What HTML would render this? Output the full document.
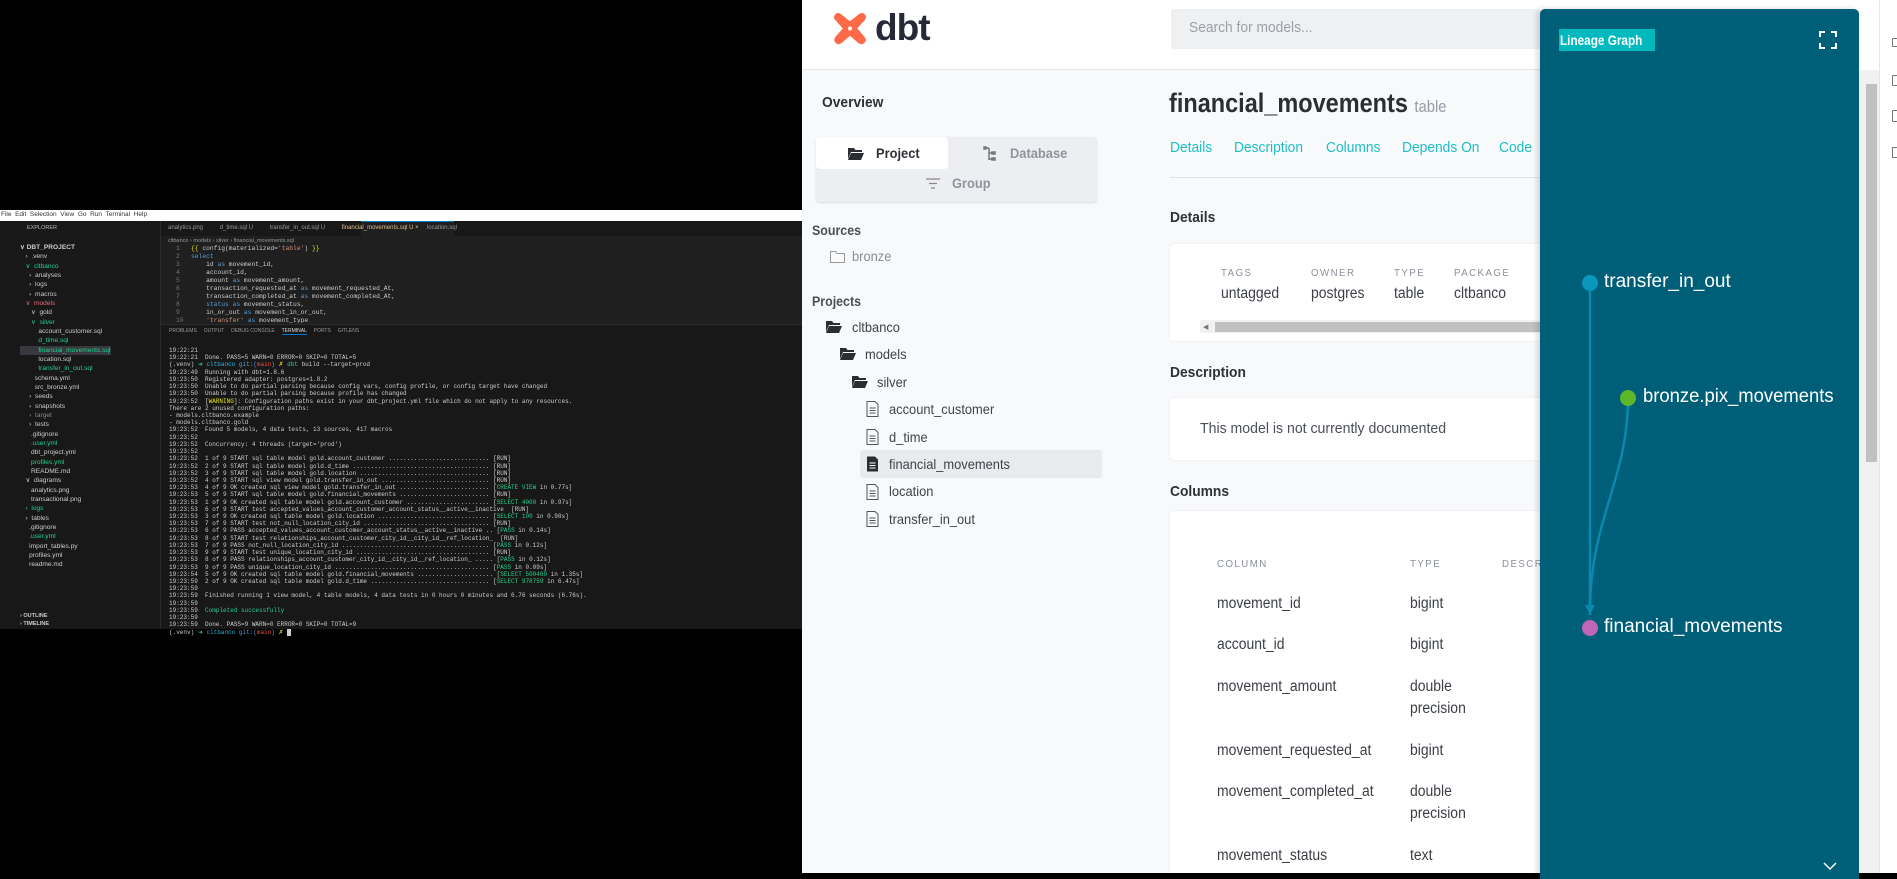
<!DOCTYPE html>
<html><head><meta charset="utf-8"><style>
*{margin:0;padding:0;box-sizing:border-box}
body{width:1897px;height:873px;background:#000;position:relative;overflow:hidden;font-family:"Liberation Sans",sans-serif}
.a{position:absolute;white-space:nowrap}
.vs{font-family:"Liberation Sans",sans-serif;font-size:6px;color:#ccc;white-space:pre}
.mono{font-family:"Liberation Mono",monospace;font-size:6.3px;white-space:pre;color:#ccc}
.term div{height:7.22px;line-height:7.22px}
.g{color:#23d18b}.c{color:#29b8db}.y{color:#e5e510}.r{color:#f14c4c}.b{color:#569cd6}.s{color:#ce9178}
.ex div{height:9.33px;line-height:9.33px}
.tr{font-size:14px;color:#40444a;position:absolute;transform:scaleX(.92);transform-origin:left;white-space:nowrap}
.hd{font-size:16px;font-weight:bold;color:#2e3136;position:absolute;transform:scaleX(.92);transform-origin:left;white-space:nowrap}
.lbl{font-size:10.5px;letter-spacing:1.6px;color:#8a9099;position:absolute;transform:scaleX(.92);transform-origin:left}
.val{font-size:15.5px;color:#3b3f45;position:absolute;transform:scaleX(.9);transform-origin:left;white-space:nowrap}
.tab{position:absolute;top:139px;font-size:15px;color:#1ebec3;transform:scaleX(.92);transform-origin:left}
</style></head><body>

<!-- VS Code -->
<div class="a" style="left:0;top:210px;width:802px;height:11px;background:#fff"></div>
<div class="a vs" style="left:1px;top:211px;color:#333;font-size:6.5px">File  Edit  Selection  View  Go  Run  Terminal  Help</div>
<div class="a" style="left:0;top:221px;width:802px;height:408px;background:#1f1f1f"></div>
<div class="a" style="left:0;top:221px;width:18px;height:408px;background:#181818"></div>
<div class="a" style="left:18px;top:221px;width:143px;height:408px;background:#181818;border-right:1px solid #2b2b2b"></div>
<div class="a" style="left:161px;top:221px;width:641px;height:15px;background:#181818"></div>
<div class="a" style="left:361px;top:221px;width:93px;height:15px;background:#1f1f1f;border-top:1px solid #0078d4"></div>
<div class="a vs" style="left:168px;top:225px;color:#999">analytics.png          d_time.sql U          transfer_in_out.sql U          <span style="color:#e2c08d">financial_movements.sql U ×</span>     location.sql</div>
<div class="a vs" style="left:27px;top:225px;color:#bbb;font-size:5.5px">EXPLORER</div>
<div class="a vs" style="left:168px;top:238px;color:#999;font-size:5.5px">cltbanco › models › silver › financial_movements.sql</div>
<div class="a vs ex" style="left:20px;top:236px;font-size:6.6px">
<div style="font-weight:bold">∨ DBT_PROJECT</div><div>   ›  .venv</div><div class="g">   ∨  cltbanco</div><div>     ›  analyses</div><div>     ›  logs</div><div>     ›  macros</div><div class="r" style="color:#e06c75">   ∨  models</div><div>      ∨  gold</div><div class="g">      ∨  silver</div><div>          account_customer.sql</div><div class="g">          d_time.sql</div><div class="g" style="background:#37373d">          financial_movements.sql</div><div>          location.sql</div><div class="g">          transfer_in_out.sql</div><div>        schema.yml</div><div>        src_bronze.yml</div><div>     ›  seeds</div><div>     ›  snapshots</div><div style="color:#888">     ›  target</div><div>     ›  tests</div><div>      .gitignore</div><div class="g">      .user.yml</div><div>      dbt_project.yml</div><div class="g">      profiles.yml</div><div>      README.md</div><div>   ∨  diagrams</div><div>      analytics.png</div><div>      transactional.png</div><div class="g">   ›  logs</div><div>   ›  tables</div><div>     .gitignore</div><div class="g">     .user.yml</div><div>     import_tables.py</div><div>     profiles.yml</div><div>     readme.md</div></div>
<div class="a vs" style="left:20px;top:613px;font-size:5.5px;font-weight:bold">› OUTLINE</div>
<div class="a vs" style="left:20px;top:621px;font-size:5.5px;font-weight:bold">› TIMELINE</div>
<div class="a mono" style="left:176px;top:245px;line-height:8px;color:#6e7681">1
2
3
4
5
6
7
8
9
10</div>
<div class="a mono" style="left:191px;top:245px;line-height:8px;height:78px;overflow:hidden"><span class="y">{{</span> config(materialized=<span class="s">'table'</span>) <span class="y">}}</span>
<span class="b">select</span>
    id <span class="b">as</span> movement_id,
    account_id,
    amount <span class="b">as</span> movement_amount,
    transaction_requested_at <span class="b">as</span> movement_requested_At,
    transaction_completed_at <span class="b">as</span> movement_completed_At,
    <span class="b">status as</span> movement_status,
    in_or_out <span class="b">as</span> movement_in_or_out,
    <span class="s">'transfer'</span> <span class="b">as</span> movement_type</div>
<div class="a" style="left:161px;top:324px;width:641px;height:305px;background:#181818;border-top:1px solid #2b2b2b"></div>
<div class="a vs" style="left:169px;top:328px;color:#999;font-size:5px">PROBLEMS     OUTPUT     DEBUG CONSOLE     <span style="color:#ddd;border-bottom:1px solid #0078d4">TERMINAL</span>     PORTS     GITLENS</div>
<div class="a mono term" style="left:169px;top:340px;font-size:6px">
<div>19:22:21</div><div>19:22:21  Done. PASS=5 WARN=0 ERROR=0 SKIP=0 TOTAL=5</div><div>(.venv) <span class="g">➜</span> <span class="c">cltbanco</span> <span class="b">git:(</span><span class="r">main</span><span class="b">)</span> <span class="y">✗</span> <span class="g">dbt</span> build --target=prod</div><div>19:23:49  Running with dbt=1.8.6</div><div>19:23:50  Registered adapter: postgres=1.8.2</div><div>19:23:50  Unable to do partial parsing because config vars, config profile, or config target have changed</div><div>19:23:50  Unable to do partial parsing because profile has changed</div><div>19:23:52  [<span class="y">WARNING</span>]: Configuration paths exist in your dbt_project.yml file which do not apply to any resources.</div><div>There are 2 unused configuration paths:</div><div>- models.cltbanco.example</div><div>- models.cltbanco.gold</div><div>19:23:52  Found 5 models, 4 data tests, 13 sources, 417 macros</div><div>19:23:52</div><div>19:23:52  Concurrency: 4 threads (target='prod')</div><div>19:23:52</div><div>19:23:52  1 of 9 START sql table model gold.account_customer ............................ [RUN]</div><div>19:23:52  2 of 9 START sql table model gold.d_time ...................................... [RUN]</div><div>19:23:52  3 of 9 START sql table model gold.location .................................... [RUN]</div><div>19:23:52  4 of 9 START sql view model gold.transfer_in_out .............................. [RUN]</div><div>19:23:53  4 of 9 OK created sql view model gold.transfer_in_out ......................... [<span class="g">CREATE VIEW</span> in 0.77s]</div><div>19:23:53  5 of 9 START sql table model gold.financial_movements ......................... [RUN]</div><div>19:23:53  1 of 9 OK created sql table model gold.account_customer ....................... [<span class="g">SELECT 4000</span> in 0.97s]</div><div>19:23:53  6 of 9 START test accepted_values_account_customer_account_status__active__inactive  [RUN]</div><div>19:23:53  3 of 9 OK created sql table model gold.location ............................... [<span class="g">SELECT 100</span> in 0.98s]</div><div>19:23:53  7 of 9 START test not_null_location_city_id ................................... [RUN]</div><div>19:23:53  6 of 9 PASS accepted_values_account_customer_account_status__active__inactive .. [<span class="g">PASS</span> in 0.14s]</div><div>19:23:53  8 of 9 START test relationships_account_customer_city_id__city_id__ref_location_  [RUN]</div><div>19:23:53  7 of 9 PASS not_null_location_city_id ......................................... [<span class="g">PASS</span> in 0.12s]</div><div>19:23:53  9 of 9 START test unique_location_city_id ..................................... [RUN]</div><div>19:23:53  8 of 9 PASS relationships_account_customer_city_id__city_id__ref_location_ ..... [<span class="g">PASS</span> in 0.12s]</div><div>19:23:53  9 of 9 PASS unique_location_city_id ........................................... [<span class="g">PASS</span> in 0.09s]</div><div>19:23:54  5 of 9 OK created sql table model gold.financial_movements ..................... [<span class="g">SELECT 500460</span> in 1.35s]</div><div>19:23:59  2 of 9 OK created sql table model gold.d_time ................................. [<span class="g">SELECT 978759</span> in 6.47s]</div><div>19:23:59</div><div>19:23:59  Finished running 1 view model, 4 table models, 4 data tests in 0 hours 0 minutes and 6.76 seconds (6.76s).</div><div>19:23:59</div><div>19:23:59  <span class="g">Completed successfully</span></div><div>19:23:59</div><div>19:23:59  Done. PASS=9 WARN=0 ERROR=0 SKIP=0 TOTAL=9</div><div>(.venv) <span class="g">➜</span> <span class="c">cltbanco</span> <span class="b">git:(</span><span class="r">main</span><span class="b">)</span> <span class="y">✗</span> <span style="background:#ccc">&nbsp;</span></div></div>

<!-- dbt docs -->
<div class="a" style="left:802px;top:0;width:1057px;height:873px;background:#f8f9fb"></div>
<div class="a" style="left:802px;top:0;width:1057px;height:70px;background:#fff;border-bottom:1px solid #e4e6ea"></div>
<svg class="a" style="left:832px;top:11px" width="36" height="35" viewBox="0 0 40 38"><path d="M3 4 Q6 0 10 3 L20 11 L30 3 Q34 0 37 4 Q39 7 36 10 L28 19 L36 28 Q39 32 36 35 Q33 38 29 35 L20 27 L11 35 Q7 38 4 35 Q1 32 4 28 L12 19 L4 10 Q1 7 3 4Z" fill="#fe6a48"/><circle cx="20" cy="19" r="2.2" fill="#fff"/></svg>
<div class="a" style="left:875px;top:7px;font-size:37px;font-weight:bold;color:#262a38;letter-spacing:-1px">dbt</div>
<div class="a" style="left:1171px;top:9px;width:370px;height:40px;background:#eff0f2;border-radius:3px"></div>
<div class="a" style="left:1189px;top:19px;font-size:15px;color:#9aa0a8;transform:scaleX(.92);transform-origin:left">Search for models...</div>

<div class="hd" style="left:822px;top:94px;font-size:15px">Overview</div>
<div class="a" style="left:816px;top:137px;width:281px;height:65px;background:#eceef1;border-radius:4px;box-shadow:0 1px 2px rgba(0,0,0,.12)"></div>
<div class="a" style="left:816px;top:137px;width:132px;height:32px;background:#fff;border-radius:4px"></div>
<svg class="a" style="left:848px;top:147px" width="16" height="13" viewBox="0 0 16 13"><path d="M0 1h6l1.5 2H14v2H3L0 12z" fill="#2a2d32"/><path d="M3 6h13l-3 7H0z" fill="#2a2d32"/></svg>
<div class="hd" style="left:876px;top:145px;font-size:14px">Project</div>
<svg class="a" style="left:983px;top:146px" width="14" height="15" viewBox="0 0 14 15" fill="none" stroke="#777" stroke-width="1.5"><path d="M2 1v1M2 2h4M6 2v12M6 7h5M6 13h5"/><rect x="1" y="1" width="2" height="2" fill="#777"/><rect x="9" y="6" width="3" height="2" fill="#777"/><rect x="9" y="12" width="3" height="2" fill="#777"/></svg>
<div class="hd" style="left:1010px;top:145px;font-size:14px;color:#8f959e">Database</div>
<svg class="a" style="left:926px;top:178px" width="14" height="11" viewBox="0 0 14 11" stroke="#888" stroke-width="1.2"><path d="M0 1h14M3 5.5h8M5 10h4"/></svg>
<div class="hd" style="left:952px;top:175px;font-size:14px;color:#8f959e">Group</div>

<div class="hd" style="left:812px;top:223px;font-size:13.5px;color:#4a4e55">Sources</div>
<svg class="a" style="left:830px;top:251px" width="15" height="12" viewBox="0 0 15 12" fill="none" stroke="#999"><path d="M.5.5h5l1.5 2h7.5v9H.5z"/></svg>
<div class="tr" style="left:852px;top:248px;color:#8a8f96">bronze</div>
<div class="hd" style="left:812px;top:294px;font-size:13.5px;color:#4a4e55">Projects</div>

<svg width="0" height="0" style="position:absolute"><defs><g id="fo"><path d="M0 1h6l1.5 2H14v2H3L0 12z" fill="#2a2d32"/><path d="M3 6h13l-3 7H0z" fill="#2a2d32"/></g><g id="fi"><path d="M1 .5h8l3 3v12H1z" fill="none" stroke="#555"/><path d="M3.5 7h6M3.5 9.5h6M3.5 12h6" stroke="#555"/></g></defs></svg>
<svg class="a" style="left:826px;top:320px" width="17" height="13"><use href="#fo"/></svg>
<div class="tr" style="left:852px;top:319px">cltbanco</div>
<svg class="a" style="left:840px;top:347px" width="17" height="13"><use href="#fo"/></svg>
<div class="tr" style="left:865px;top:346px">models</div>
<svg class="a" style="left:852px;top:375px" width="17" height="13"><use href="#fo"/></svg>
<div class="tr" style="left:877px;top:374px">silver</div>
<div class="a" style="left:860px;top:450px;width:242px;height:28px;background:#e8eaed;border-radius:3px"></div>
<svg class="a" style="left:866px;top:401px" width="13" height="17"><use href="#fi"/></svg>
<div class="tr" style="left:889px;top:401px">account_customer</div>
<svg class="a" style="left:866px;top:429px" width="13" height="17"><use href="#fi"/></svg>
<div class="tr" style="left:889px;top:429px">d_time</div>
<svg class="a" style="left:866px;top:456px" width="13" height="17" viewBox="0 0 13 17"><path d="M1 .5h8l3 3v12H1z" fill="#2a2d32"/><path d="M3.5 7h6M3.5 9.5h6M3.5 12h6" stroke="#fff"/></svg>
<div class="tr" style="left:889px;top:456px">financial_movements</div>
<svg class="a" style="left:866px;top:484px" width="13" height="17"><use href="#fi"/></svg>
<div class="tr" style="left:889px;top:483px">location</div>
<svg class="a" style="left:866px;top:511px" width="13" height="17"><use href="#fi"/></svg>
<div class="tr" style="left:889px;top:511px">transfer_in_out</div>

<div class="a" style="left:1169px;top:88px;font-size:27px;font-weight:bold;color:#2b2e33;transform:scaleX(.87);transform-origin:left">financial_movements <span style="font-size:17px;font-weight:normal;color:#979ca4">table</span></div>
<div class="tab" style="left:1170px">Details</div>
<div class="tab" style="left:1234px">Description</div>
<div class="tab" style="left:1326px">Columns</div>
<div class="tab" style="left:1402px">Depends On</div>
<div class="tab" style="left:1499px">Code</div>
<div class="a" style="left:1170px;top:177px;width:370px;height:1px;background:#e2e4e8"></div>
<div class="hd" style="left:1170px;top:209px;font-size:15px">Details</div>
<div class="a" style="left:1170px;top:244px;width:380px;height:97px;background:#fff;border-radius:4px;box-shadow:0 0 2px rgba(0,0,0,.08)"></div>
<div class="lbl" style="left:1221px;top:267px">TAGS</div><div class="lbl" style="left:1311px;top:267px">OWNER</div><div class="lbl" style="left:1394px;top:267px">TYPE</div><div class="lbl" style="left:1454px;top:267px">PACKAGE</div>
<div class="val" style="left:1221px;top:285px">untagged</div><div class="val" style="left:1311px;top:285px">postgres</div><div class="val" style="left:1394px;top:285px">table</div><div class="val" style="left:1454px;top:285px">cltbanco</div>
<div class="a" style="left:1200px;top:320px;width:340px;height:13px;background:#f1f1f1"></div>
<div class="a" style="left:1215px;top:322px;width:325px;height:10px;background:#c1c1c1"></div>
<div class="a" style="left:1203px;top:323px;font-size:7px;color:#777">◀</div>
<div class="hd" style="left:1170px;top:364px;font-size:15px">Description</div>
<div class="a" style="left:1170px;top:398px;width:380px;height:62px;background:#fff;border-radius:4px;box-shadow:0 0 2px rgba(0,0,0,.08)"></div>
<div class="val" style="left:1200px;top:420px;font-size:15px;color:#4a4e55;transform:scaleX(.94)">This model is not currently documented</div>
<div class="hd" style="left:1170px;top:483px;font-size:15px">Columns</div>
<div class="a" style="left:1170px;top:511px;width:380px;height:362px;background:#fff;border-radius:4px;box-shadow:0 0 2px rgba(0,0,0,.08)"></div>
<div class="lbl" style="left:1217px;top:558px">COLUMN</div><div class="lbl" style="left:1410px;top:558px">TYPE</div><div class="lbl" style="left:1502px;top:558px">DESCR</div>
<div class="val" style="left:1217px;top:595px">movement_id</div><div class="val" style="left:1410px;top:595px">bigint</div>
<div class="val" style="left:1217px;top:636px">account_id</div><div class="val" style="left:1410px;top:636px">bigint</div>
<div class="val" style="left:1217px;top:678px">movement_amount</div><div class="val" style="left:1410px;line-height:22px;top:676px">double<br>precision</div>
<div class="val" style="left:1217px;top:742px">movement_requested_at</div><div class="val" style="left:1410px;top:742px">bigint</div>
<div class="val" style="left:1217px;top:783px">movement_completed_at</div><div class="val" style="left:1410px;top:781px;line-height:22px">double<br>precision</div>
<div class="val" style="left:1217px;top:847px">movement_status</div><div class="val" style="left:1410px;top:847px">text</div>

<!-- right strip -->
<div class="a" style="left:1859px;top:0;width:38px;height:873px;background:#fff"></div>
<div class="a" style="left:1859px;top:70px;width:20px;height:803px;background:#f1f1f1"></div>
<div class="a" style="left:1866px;top:84px;width:11px;height:378px;background:#c1c1c1"></div>
<div class="a" style="left:1879px;top:0;width:1px;height:873px;background:#e6e6e6"></div>
<div class="a" style="left:1892px;top:38px;width:6px;height:9px;border:1px solid #777;border-radius:1px"></div>
<div class="a" style="left:1892px;top:75px;width:6px;height:11px;border:1px solid #777;border-radius:1px"></div>
<div class="a" style="left:1892px;top:110px;width:6px;height:12px;border:1px solid #777;border-radius:1px"></div>
<div class="a" style="left:1892px;top:147px;width:6px;height:11px;border:1px solid #777"></div>

<!-- lineage -->
<div class="a" style="left:1540px;top:9px;width:319px;height:870px;background:#005f78;border-radius:5px 5px 0 0;box-shadow:-3px 0 6px rgba(0,0,0,.15)"></div>
<div class="a" style="left:1559px;top:29px;width:96px;height:22px;background:#00b9be"></div>
<div class="a" style="left:1560px;top:29px;color:#fff;font-size:14px;font-weight:bold;line-height:22px;transform:scaleX(.84);transform-origin:left">Lineage Graph</div>
<svg class="a" style="left:1819px;top:31px" width="18" height="18" viewBox="0 0 18 18" fill="none" stroke="#fff" stroke-width="2"><path d="M1 6V1h5M12 1h5v5M17 12v5h-5M6 17H1v-5"/></svg>
<svg class="a" style="left:1540px;top:0" width="319" height="873" viewBox="1540 0 319 873" fill="none">
<path d="M1590 283V615" stroke="#0a88ad" stroke-width="2.5"/>
<path d="M1628 398C1628 480 1590 520 1590 610" stroke="#0a88ad" stroke-width="2.5"/>
<path d="M1585 605l5 10 5-10z" fill="#0a88ad"/>
<circle cx="1590" cy="283" r="8" fill="#0a96bd"/>
<circle cx="1628" cy="398" r="8" fill="#5cb82a"/>
<circle cx="1590" cy="628" r="8" fill="#c165b8"/>
<path d="M1824 863l6 6 6-6" stroke="#fff" stroke-width="1.5"/>
</svg>
<div class="a" style="left:1604px;top:271px;font-size:19px;color:#fff">transfer_in_out</div>
<div class="a" style="left:1643px;top:386px;font-size:19px;color:#fff;transform:scaleX(.97);transform-origin:left">bronze.pix_movements</div>
<div class="a" style="left:1604px;top:616px;font-size:19px;color:#fff">financial_movements</div>
</body></html>
